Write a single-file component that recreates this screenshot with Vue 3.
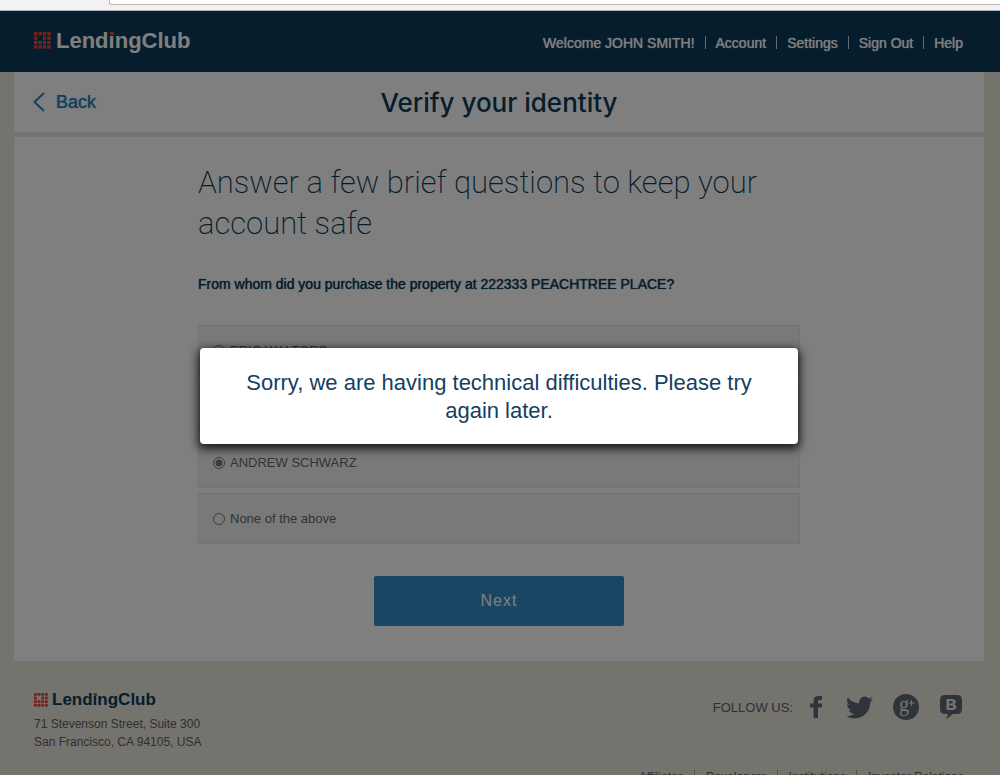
<script setup>
import { ref } from 'vue'

const answer = ref('andrew')
const options = [
  { id: 'eric', text: 'ERIC WALTORS' },
  { id: 'second', text: '' },
  { id: 'andrew', text: 'ANDREW SCHWARZ' },
  { id: 'none', text: 'None of the above' }
]
const accountLinks = ['Account', 'Settings', 'Sign Out', 'Help']
const footerLinks = ['Affiliates', 'Developers', 'Institutions', 'Investor Relations']
const cells = []
for (let r = 0; r < 4; r++) {
  for (let c = 0; c < 4; c++) {
    if (!(r === 1 && c === 1)) cells.push({ x: c * 13, y: r * 13 })
  }
}
</script>

<template>
  <div class="window">
    <div class="chrome"><div class="address"></div></div>
    <div class="viewport">
      <header class="top">
        <a class="logo" href="#" aria-label="LendingClub">
          <svg class="mark" viewBox="0 0 50 50" aria-hidden="true">
            <rect v-for="(c, i) in cells" :key="i" :x="c.x" :y="c.y" width="10" height="10" />
          </svg>
          <span class="word">Lend<span class="dot">i</span>ngClub</span>
        </a>
        <nav class="account">
          <span class="item">Welcome JOHN SMITH!</span>
          <a v-for="l in accountLinks" :key="l" class="item" href="#">{{ l }}</a>
        </nav>
      </header>

      <div class="title-bar">
        <a class="back" href="#">
          <svg viewBox="0 0 12 20" aria-hidden="true"><path d="M11 1 1.500 10 11 19" /></svg>
          Back
        </a>
        <h1>Verify your identity</h1>
      </div>

      <main class="content">
        <form class="column" @submit.prevent>
          <h2>Answer a few brief questions to keep your account safe</h2>
          <fieldset>
            <legend>From whom did you purchase the property at 222333 PEACHTREE PLACE?</legend>
            <div class="options">
              <label v-for="o in options" :key="o.id" class="option">
                <input v-model="answer" type="radio" name="seller" :value="o.id">
                <span>{{ o.text }}</span>
              </label>
            </div>
          </fieldset>
          <button class="next" type="submit">Next</button>
        </form>
      </main>

      <footer class="bottom">
        <div class="row">
          <div>
            <a class="logo small" href="#" aria-label="LendingClub">
              <svg class="mark" viewBox="0 0 50 50" aria-hidden="true">
                <rect v-for="(c, i) in cells" :key="i" :x="c.x" :y="c.y" width="10" height="10" />
              </svg>
              <span class="word">Lend<span class="dot">i</span>ngClub</span>
            </a>
            <address>71 Stevenson Street, Suite 300<br>San Francisco, CA 94105, USA</address>
          </div>
          <div class="follow">
            <span>FOLLOW US:</span>
            <a class="fb" href="#" aria-label="Facebook">
              <svg viewBox="0 0 12 22"><path d="M3.500 22V11.500H0V7.500h3.500V5c0-3.200 1.700-5 5-5H12v4h-2c-1.500 0-2 .6-2 1.800v1.700h4l-.5 4H8V22z" /></svg>
            </a>
            <a class="tw" href="#" aria-label="Twitter">
              <svg viewBox="0 0 24 20"><path d="M23.950 2.600a10 10 0 0 1-2.800.8 4.900 4.900 0 0 0 2.160-2.700c-.95.550-2 .95-3.130 1.200a4.920 4.920 0 0 0-8.400 4.480A13.900 13.900 0 0 1 1.640 1.200a4.800 4.800 0 0 0-.67 2.500c0 1.700.87 3.200 2.190 4.100a4.900 4.900 0 0 1-2.230-.6v.06c0 2.380 1.700 4.370 3.950 4.820a5 5 0 0 1-2.210.09 4.940 4.940 0 0 0 4.600 3.400A9.900 9.900 0 0 1 0 17.600a14 14 0 0 0 7.550 2.200c9.050 0 14-7.500 14-14v-.6c.96-.7 1.800-1.600 2.460-2.600z" /></svg>
            </a>
            <a class="gp" href="#" aria-label="Google Plus">
              <svg viewBox="0 0 26 26">
                <circle cx="13" cy="13" r="13" />
                <text class="g" x="6" y="17">g</text>
                <path class="plus" d="M18.500 6v6M15.500 9h6" />
              </svg>
            </a>
            <a class="blog" href="#" aria-label="Blog">
              <svg viewBox="0 0 22 25">
                <path d="M5 0h12q5 0 5 5v9q0 5-5 5h-4l-7 5.500 2-5.500H5q-5 0-5-5V5q0-5 5-5z" />
                <path class="cut" fill-rule="evenodd" d="M6.500 4h5.700c4.300 0 4.500 4.300 1.900 5.200 3.300.9 2.900 5.800-1.500 5.800H6.500zM9 6v2.500h2.700c1.600 0 1.600-2.500 0-2.500zM9 10.500V13h3c1.700 0 1.700-2.500 0-2.500z" />
              </svg>
            </a>
          </div>
        </div>
        <nav class="links">
          <a v-for="l in footerLinks" :key="l" href="#">{{ l }}</a>
        </nav>
      </footer>

      <div class="overlay">
        <div class="dialog" role="alertdialog" aria-modal="true" aria-labelledby="message">
          <p id="message">Sorry, we are having technical difficulties. Please try again later.</p>
        </div>
      </div>
    </div>
  </div>
</template>

<style>
body { margin: 0; }
</style>

<style scoped>
* { box-sizing: border-box; }
.window {
  height: 100vh;
  display: flex;
  flex-direction: column;
  overflow: hidden;
  font-family: "Liberation Sans", Arial, sans-serif;
}
a { color: inherit; text-decoration: none; }
.chrome {
  flex: none;
  height: 11px;
  padding-left: 109px;
  background: #f3f1f1;
  border-bottom: 1px solid #a9b5bb;
}
.address {
  height: 5px;
  background: #fff;
  border: solid #bbb3ae;
  border-width: 0 0 1px 1px;
  border-bottom-left-radius: 3px;
}
.viewport {
  flex: 1;
  position: relative;
  overflow: hidden;
  background: #e8e6dc;
}
.top {
  height: 61px;
  padding: 0 37px 2px 34px;
  display: flex;
  align-items: center;
  justify-content: space-between;
  background: #0a3a58;
  color: #fff;
}
.logo {
  display: flex;
  align-items: center;
  gap: 5px;
  font-size: 22px;
  line-height: 26px;
  font-weight: bold;
}
.mark { width: 17px; height: 17px; fill: #e8453c; }
.dot { position: relative; }
.dot::before {
  content: "";
  position: absolute;
  left: 1px;
  top: 4px;
  width: 4px;
  height: 3px;
  background: #e8453c;
}
.account { display: flex; font-size: 14px; line-height: 16px; padding-top: 4px; }
.item { text-shadow: 0 0 1px #fff; display: flex; align-items: center; }
.item + .item::before {
  content: "";
  width: 1px;
  height: 13px;
  margin: 0 10px;
  background: #d0d8de;
}
.title-bar {
  margin: 0 16px 0 14px;
  height: 60px;
  padding: 0 19px;
  display: grid;
  grid-template-columns: 1fr auto 1fr;
  align-items: center;
  background: #fff;
}
.back { display: flex; align-items: center; gap: 11px; color: #2d7fb8; font-size: 18px; text-shadow: 0 0 1px #2d7fb8; }
.back svg { width: 12px; height: 20px; fill: none; stroke: #2d7fb8; stroke-width: 2; }
h1 { margin: 0; padding-top: 2px; font: 500 26px/32px Inter, "Liberation Sans", sans-serif; color: #0a3a58; }
.content {
  margin: 0 16px 0 14px;
  padding: 25px 20px 35px;
  background: #fff;
  border-top: 5px solid #e6e6e6;
}
.column { max-width: 602px; margin: 0 auto; }
h2 {
  margin: 0 0 31px;
  font: 200 31px/41px Roboto, "Liberation Sans", sans-serif;
  color: #0a3a58;
}
fieldset { margin: 0; padding: 0; border: 0; min-width: 0; }
legend { padding: 0; font-size: 14px; line-height: 18px; color: #0a3a58; text-shadow: 0 0 1px #0a3a58; }
.options { display: grid; gap: 5px; margin-top: 32px; }
.option {
  height: 51px;
  padding-left: 14px;
  display: flex;
  align-items: center;
  gap: 5px;
  background: #f2f2f2;
  border: 1px solid #e9e9e9;
  color: #66676b;
  font-size: 13px;
}
.option input {
  appearance: none;
  width: 12px;
  height: 12px;
  margin: 0;
  border: 1px solid #77787c;
  border-radius: 50%;
}
.option input:checked { background: radial-gradient(circle, #77787c 3px, transparent 4px); }
.next {
  display: block;
  width: 250px;
  height: 50px;
  margin: 32px auto 0;
  border: 0;
  border-radius: 2px;
  background: #348ccc;
  color: #fff;
  font: 16px "Liberation Sans", Arial, sans-serif;
  letter-spacing: 1px;
}
.bottom { padding: 29px 36px 20px 34px; color: #5f6168; }
.row { display: flex; justify-content: space-between; }
.small { gap: 4px; font-size: 17px; line-height: 20px; color: #0a3a58; }
.small .mark { width: 14px; height: 14px; }
.small .dot::before { top: 3px; width: 3px; }
address { margin-top: 5px; font-style: normal; font-size: 12px; line-height: 18px; }
.follow { display: flex; align-items: center; height: 34px; margin-right: 2px; font-size: 13px; }
.follow a { display: flex; }
.follow svg { fill: #5f6678; }
.fb { margin-left: 17px; }
.fb svg { width: 12px; height: 22px; }
.tw { margin-left: 24px; }
.tw svg { width: 27px; height: 23px; }
.gp { margin-left: 20px; }
.gp svg { width: 26px; height: 26px; }
.follow .g { font: 20px "Liberation Serif", serif; fill: #e8e6dc; }
.gp .plus { fill: none; stroke: #e8e6dc; stroke-width: 1; }
.blog { margin-left: 21px; }
.blog svg { width: 22px; height: 25px; }
.follow .cut { fill: #e8e6dc; }
.links { display: flex; justify-content: flex-end; margin-top: 19px; font-size: 12px; line-height: 14px; }
.links a + a { margin-left: 10px; padding-left: 11px; border-left: 1px solid #a5a5a2; }
.overlay {
  position: absolute;
  inset: 0;
  padding: 6px 2px 0 0;
  display: flex;
  align-items: center;
  justify-content: center;
  background: rgba(0, 0, 0, 0.5);
}
.dialog {
  width: 598px;
  padding: 21px 40px 19px;
  background: #fff;
  border-radius: 4px;
  box-shadow: 0 3px 10px 2px rgba(0, 0, 0, 0.8);
}
.dialog p { margin: 0; text-align: center; font-size: 22px; line-height: 28px; color: #15405f; }
</style>
